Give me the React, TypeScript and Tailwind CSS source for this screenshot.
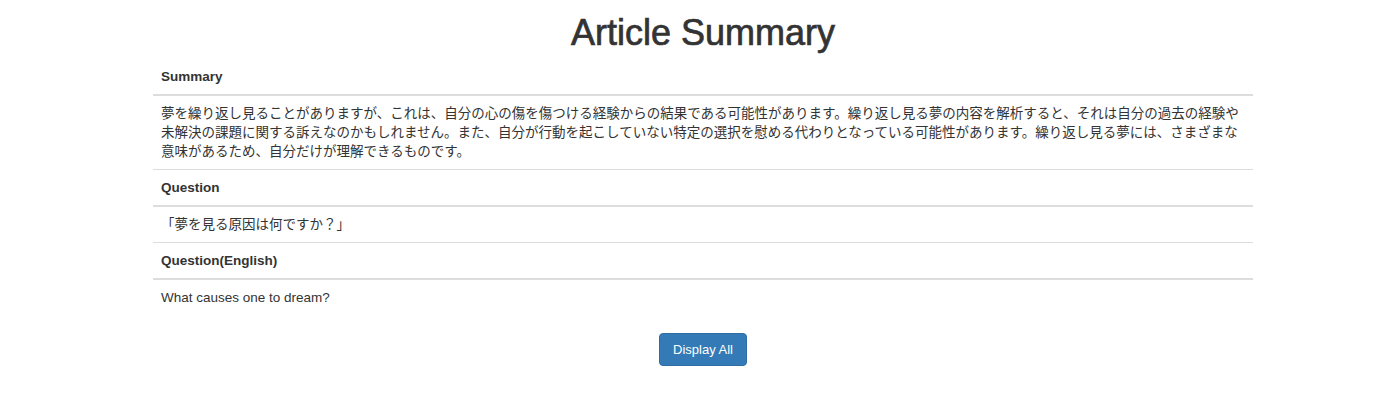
import React from "react";

const font = { fontFamily: '"Liberation Sans", "Noto Sans CJK JP", sans-serif' };

function Header({ children, first }: { children: React.ReactNode; first?: boolean }) {
  return (
    <div
      className={`px-2 py-2 leading-[19px] font-bold border-b-2 border-[#ddd] ${first ? "" : "border-t border-t-[#ddd]"}`}
    >
      {children}
    </div>
  );
}

function Body({ children }: { children: React.ReactNode }) {
  return <div className="px-2 py-2 leading-[19px]">{children}</div>;
}

export default function App() {
  return (
    <div className="bg-white min-h-[393px] text-[#333] pl-[6px]" style={font}>
      <div className="mx-auto w-[1100px] flex flex-col">
        <h1 className="text-center text-[36px] leading-[40px] font-normal [-webkit-text-stroke:0.7px_#333] mt-[13px] mb-[6px]">
          Article Summary
        </h1>
        <div className="text-[13.5px] flex flex-col">
          <Header first>Summary</Header>
          <Body>
            <div className="whitespace-nowrap">
              夢を繰り返し見ることがありますが、これは、自分の心の傷を傷つける経験からの結果である可能性があります。繰り返し見る夢の内容を解析すると、それは自分の過去の経験や
            </div>
            <div className="whitespace-nowrap">
              未解決の課題に関する訴えなのかもしれません。また、自分が行動を起こしていない特定の選択を慰める代わりとなっている可能性があります。繰り返し見る夢には、さまざまな
            </div>
            <div className="whitespace-nowrap">意味があるため、自分だけが理解できるものです。</div>
          </Body>
          <Header>Question</Header>
          <Body>「夢を見る原因は何ですか？」</Body>
          <Header>Question(English)</Header>
          <Body>What causes one to dream?</Body>
        </div>
        <div className="flex justify-center mt-[18px]">
          <button className="bg-[#337ab7] border border-[#2e6da4] rounded-[4px] text-white text-[13px] leading-[19px] py-[6px] px-[13px]">
            Display All
          </button>
        </div>
      </div>
    </div>
  );
}
